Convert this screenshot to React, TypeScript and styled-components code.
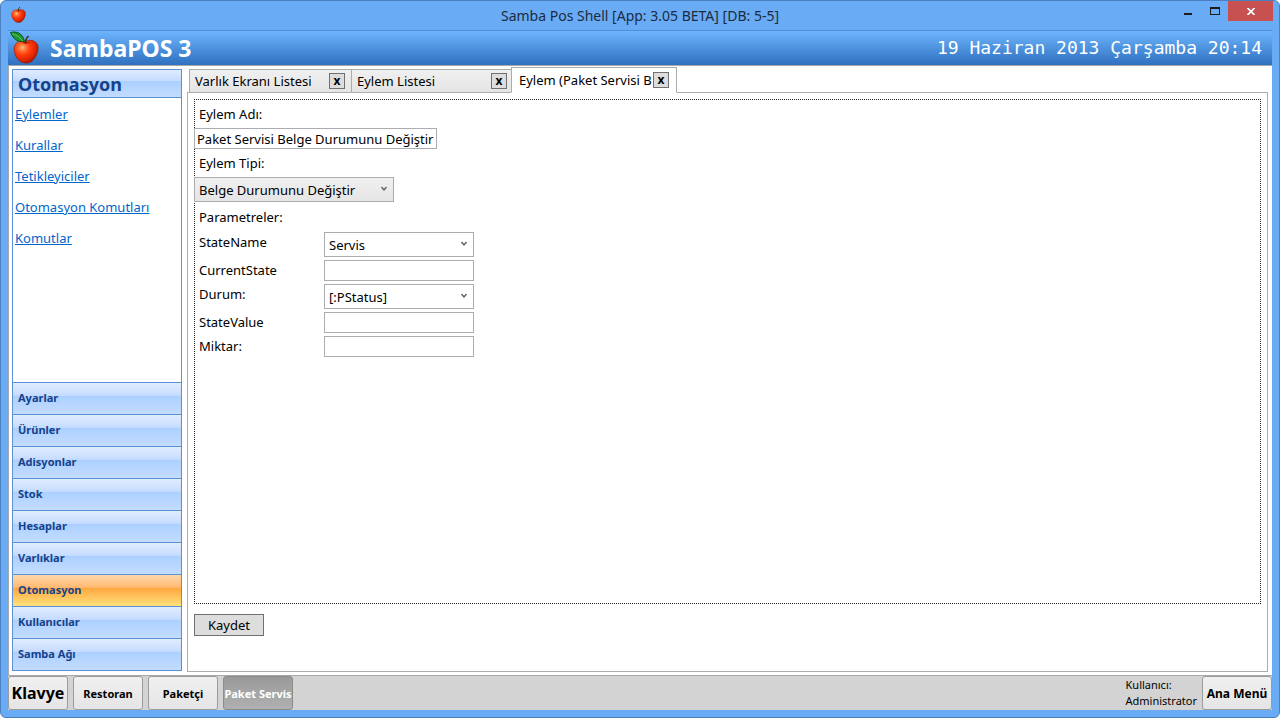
import React from "react";
import styled, { createGlobalStyle, css } from "styled-components";

const ui = '"Noto Sans", "Open Sans", sans-serif';

const GlobalStyle = createGlobalStyle`
  *, *::before, *::after { box-sizing: border-box; }
  body { margin: 0; background: #fff; font-family: ${ui}; font-size: 13px; color: #000; }
  button, input, select { font: inherit; color: inherit; margin: 0; border-radius: 0; }
  button { padding: 0; cursor: pointer; }
`;

const Window = styled.div`
  min-height: 100vh;
  display: flex;
  flex-direction: column;
  padding: 0 7px 7px;
  border: 1px solid #4a80bf;
  border-radius: 6px;
  background: #6aabf6;
`;

const TitleBar = styled.header`
  display: grid;
  grid-template-columns: 1fr auto 1fr;
  height: 29px;
  padding: 0 3px;
`;

const WindowTitle = styled.h1`
  margin: 0;
  font-size: 14px;
  font-weight: 400;
  line-height: 30px;
  color: #1b2b3d;
`;

const TitleIcon = styled.span`
  padding-top: 6px;
  line-height: 0;
`;

const Controls = styled.div`
  display: flex;
  justify-content: flex-end;
  align-items: flex-start;
  margin-right: -4px;
`;

const ControlButton = styled.button<{ $close?: boolean }>`
  display: grid;
  place-items: center;
  width: ${(p) => (p.$close ? 45 : 27)}px;
  height: 20px;
  border: 0;
  background: ${(p) => (p.$close ? "#c75050" : "transparent")};
`;

const Client = styled.div`
  flex: 1;
  display: flex;
  flex-direction: column;
  background: #fff;
`;

const Brand = styled.div`
  display: flex;
  align-items: flex-start;
  height: 36px;
  padding: 0 10px 0 2px;
  border-top: 1px solid #4f8fd6;
  border-bottom: 1px solid #a9a9a9;
  background: linear-gradient(#6db5fd, #2f70bf);
  color: #fff;
  line-height: 34px;
`;

const BrandName = styled.h2`
  flex: 1;
  margin: 0 0 0 11px;
  font-size: 23px;
  font-weight: 700;
`;

const Clock = styled.time`
  font-family: "DejaVu Sans Mono", "Liberation Mono", monospace;
  font-size: 18px;
  white-space: pre;
`;

const Body = styled.div`
  flex: 1;
  display: flex;
  gap: 5px;
  padding: 1px 4px 3px 3px;
  border-left: 1px solid #a9a9a9;
`;

const Sidebar = styled.aside`
  width: 170px;
  flex: none;
  display: flex;
  flex-direction: column;
  margin: 2px 0 1px;
  border: 1px solid #5b92d6;
`;

const blueGloss = "linear-gradient(#e0ecff 0%, #c6dcff 40%, #acd0ff 42%, #c3dcff 100%)";
const orangeGloss = "linear-gradient(#ffd9ab 0%, #ffb972 40%, #ffa73f 42%, #ffe17c 100%)";

const SideTitle = styled.h3`
  margin: 0;
  height: 28px;
  padding-left: 5px;
  border-bottom: 1px solid #5b92d6;
  background: ${blueGloss};
  color: #15428b;
  font-size: 18px;
  line-height: 28px;
`;

const Links = styled.nav`
  flex: 1;
  display: flex;
  flex-direction: column;
  align-items: flex-start;
  padding: 1px 2px;
`;

const SideLink = styled.a`
  color: #0066cc;
  line-height: 31px;
`;

const Group = styled.button<{ $active?: boolean }>`
  height: 32px;
  flex: none;
  padding: 0 5px 2px;
  border: 0;
  border-top: 1px solid #5b92d6;
  background: ${(p) => (p.$active ? orangeGloss : blueGloss)};
  color: #15428b;
  font-size: 11px;
  font-weight: 700;
  text-align: left;
`;

const Main = styled.main`
  flex: 1;
  min-width: 0;
  display: flex;
  flex-direction: column;
`;

const Tabs = styled.div`
  display: flex;
  align-items: flex-end;
  height: 26px;
  padding-left: 2px;
  margin-bottom: -1px;
  z-index: 1;
`;

const Tab = styled.div<{ $active?: boolean; $width: number }>`
  display: flex;
  align-items: center;
  width: ${(p) => p.$width}px;
  height: 24px;
  padding: 0 6px 0 5px;
  border: 1px solid #acacac;
  border-right-width: 0;
  background: linear-gradient(#f0f0f0, #e5e5e5);
  ${(p) =>
    p.$active &&
    css`
      height: 26px;
      padding: 0 7px;
      margin-left: -2px;
      border-right-width: 1px;
      border-bottom-color: #fff;
      background: #fff;
    `}
`;

const TabLabel = styled.button`
  flex: 1;
  min-width: 0;
  overflow: hidden;
  border: 0;
  background: none;
  text-align: left;
  white-space: nowrap;
`;

const TabClose = styled.button`
  flex: none;
  width: 16px;
  height: 16px;
  border: 1px solid #707070;
  background: #ddd;
  font-size: 12px;
  font-weight: 700;
  line-height: 12px;
`;

const Panel = styled.section`
  flex: 1;
  display: flex;
  flex-direction: column;
  padding: 6px 6px 35px;
  border: 1px solid #acacac;
`;

const Form = styled.form`
  flex: 1;
  display: flex;
  flex-direction: column;
  align-items: flex-start;
  border: 1px dotted #222;
`;

const Label = styled.label`
  padding-left: 4px;
  line-height: 28px;
`;

const Caption = styled.p`
  margin: 0;
  padding-left: 4px;
  line-height: 30px;
`;

const TextBox = styled.input`
  height: 21px;
  padding: 0 2px;
  border: 1px solid #abadb3;
  background: #fff;
`;

const NameBox = styled(TextBox)`
  width: 243px;
  margin-left: -1px;
`;

const SelectWrap = styled.div<{ $raised?: boolean }>`
  display: grid;
  align-items: center;
  width: ${(p) => (p.$raised ? 200 : 150)}px;
  height: 25px;
  border: 1px solid #acacac;
  background: ${(p) => (p.$raised ? "linear-gradient(#f0f0f0, #e5e5e5)" : "#fff")};
  margin-left: ${(p) => (p.$raised ? -1 : 0)}px;

  > * { grid-area: 1 / 1; }
  > svg { justify-self: end; margin-right: 5px; pointer-events: none; }
`;

const Select = styled.select`
  appearance: none;
  width: 100%;
  height: 23px;
  padding: 0 20px 0 4px;
  border: 0;
  background: transparent;
`;

const Params = styled.div`
  display: grid;
  grid-template-columns: 125px 150px;
  row-gap: 3px;
  padding-left: 4px;
`;

const ParamLabel = styled.label`
  line-height: 20px;
`;

const SaveButton = styled.button`
  align-self: flex-start;
  width: 70px;
  height: 22px;
  margin-top: 10px;
  border: 1px solid #707070;
  background: #ddd;
`;

const Footer = styled.footer`
  display: flex;
  align-items: center;
  gap: 5px;
  height: 35px;
  border-top: 1px solid #a9a9a9;
  background: #d3d3d3;
`;

const FooterButton = styled.button<{ $size?: number; $width?: number; $pressed?: boolean }>`
  flex: none;
  width: ${(p) => p.$width ?? 70}px;
  height: 34px;
  border: 1px solid ${(p) => (p.$pressed ? "#8c8c8c" : "#9c9c9c")};
  border-radius: 3px;
  background: ${(p) => (p.$pressed ? "linear-gradient(#9a9a9a, #b0b0b0)" : "linear-gradient(#f0f0f0, #e5e5e5)")};
  color: ${(p) => (p.$pressed ? "#fff" : "#000")};
  font-size: ${(p) => p.$size ?? 11}px;
  font-weight: 700;
  white-space: nowrap;
`;

const User = styled.p`
  margin: 0 0 0 auto;
  font-size: 11px;
  line-height: 16px;
`;

const Chevron = () => (
  <svg width="8" height="8" viewBox="0 0 8 8" aria-hidden="true">
    <path d="M1.500 1 4 4 6.500 1" fill="none" stroke="#606060" strokeWidth="1.400" />
  </svg>
);

const Apple = ({ width, height, id, leaf }: { width: number; height: number; id: string; leaf?: boolean }) => (
  <svg width={width} height={height} viewBox={leaf ? "0 0 29 33" : "3 5 26 28"} aria-hidden="true">
    <defs>
      <radialGradient id={id} cx="0.35" cy="0.32" r="0.75">
        <stop offset="0" stopColor="#ffc08c" />
        <stop offset="0.18" stopColor="#ff7a3a" />
        <stop offset="0.45" stopColor="#ff3a0c" />
        <stop offset="0.75" stopColor="#dc2400" />
        <stop offset="1" stopColor="#8e1000" />
      </radialGradient>
    </defs>
    <path d="M16 10.500C20 8 26.500 9.500 28 15C29 22 24 30 19.500 31.500C17 32.300 15 32.300 12.500 31.500C7 29.500 3 22 4.300 16C6 10 12 8.500 16 10.500Z" fill={`url(#${id})`} stroke="#8a1c00" strokeWidth="0.600" />
    <path d="M11.500 11.800Q16 14 21 11.200Q16 10 11.500 11.800Z" fill="#a01c00" opacity="0.700" />
    <path d="M15.500 12.500Q15.300 8 18.500 5" fill="none" stroke="#4a260c" strokeWidth="1.500" />
    {leaf && (
      <>
        <path d="M0.500 1.500C6 0 12.500 1.500 14.500 10.500C7 11.500 3 7.500 0.500 1.500Z" fill="#1c9630" stroke="#064d10" strokeWidth="0.900" />
        <path d="M2 2.500Q9 4.500 13 10" fill="none" stroke="#7bd67a" strokeWidth="0.700" />
      </>
    )}
  </svg>
);

const groups = ["Ayarlar", "Ürünler", "Adisyonlar", "Stok", "Hesaplar", "Varlıklar", "Otomasyon", "Kullanıcılar", "Samba Ağı"];
const links = ["Eylemler", "Kurallar", "Tetikleyiciler", "Otomasyon Komutları", "Komutlar"];
const tabs = [
  { label: "Varlık Ekranı Listesi", width: 162 },
  { label: "Eylem Listesi", width: 162 },
  { label: "Eylem (Paket Servisi B", width: 166, active: true },
];
const params: { id: string; label: string; value?: string }[] = [
  { id: "stateName", label: "StateName", value: "Servis" },
  { id: "currentState", label: "CurrentState" },
  { id: "durum", label: "Durum:", value: "[:PStatus]" },
  { id: "stateValue", label: "StateValue" },
  { id: "miktar", label: "Miktar:" },
];

export default function App() {
  return (
    <>
      <GlobalStyle />
      <Window>
        <TitleBar>
          <TitleIcon><Apple width={15} height={16} id="apple-small" /></TitleIcon>
          <WindowTitle>Samba Pos Shell [App: 3.05 BETA] [DB: 5-5]</WindowTitle>
          <Controls>
            <ControlButton aria-label="Simge durumuna küçült">
              <svg width="8" height="8"><path d="M0 6h8v2H0z" fill="#1c1c1c" /></svg>
            </ControlButton>
            <ControlButton aria-label="Ekranı kapla">
              <svg width="10" height="8"><path d="M0 0h10v8H0zM1 2v5h8V2z" fill="#1c1c1c" fillRule="evenodd" /></svg>
            </ControlButton>
            <ControlButton $close aria-label="Kapat">
              <svg width="8" height="7"><path d="M.5 0 7.500 7M7.500 0 .5 7" stroke="#fff" strokeWidth="1.700" /></svg>
            </ControlButton>
          </Controls>
        </TitleBar>
        <Client>
          <Brand>
            <Apple width={29} height={33} id="apple-large" leaf />
            <BrandName>SambaPOS 3</BrandName>
            <Clock dateTime="2013-06-19T20:14">19 Haziran 2013 Çarşamba 20:14</Clock>
          </Brand>
          <Body>
            <Sidebar>
              <SideTitle>Otomasyon</SideTitle>
              <Links>
                {links.map((l) => <SideLink key={l} href="#">{l}</SideLink>)}
              </Links>
              {groups.map((g) => <Group key={g} $active={g === "Otomasyon"}>{g}</Group>)}
            </Sidebar>
            <Main>
              <Tabs>
                {tabs.map((t) => (
                  <Tab key={t.label} $width={t.width} $active={t.active}>
                    <TabLabel>{t.label}</TabLabel>
                    <TabClose aria-label="Sekmeyi kapat">x</TabClose>
                  </Tab>
                ))}
              </Tabs>
              <Panel>
                <Form id="action" onSubmit={(e) => e.preventDefault()}>
                  <Label htmlFor="name">Eylem Adı:</Label>
                  <NameBox id="name" defaultValue="Paket Servisi Belge Durumunu Değiştir" />
                  <Label htmlFor="type">Eylem Tipi:</Label>
                  <SelectWrap $raised>
                    <Select id="type"><option>Belge Durumunu Değiştir</option></Select>
                    <Chevron />
                  </SelectWrap>
                  <Caption>Parametreler:</Caption>
                  <Params>
                    {params.map((p) => (
                      <React.Fragment key={p.id}>
                        <ParamLabel htmlFor={p.id}>{p.label}</ParamLabel>
                        {p.value ? (
                          <SelectWrap>
                            <Select id={p.id}><option>{p.value}</option></Select>
                            <Chevron />
                          </SelectWrap>
                        ) : (
                          <TextBox id={p.id} />
                        )}
                      </React.Fragment>
                    ))}
                  </Params>
                </Form>
                <SaveButton type="submit" form="action">Kaydet</SaveButton>
              </Panel>
            </Main>
          </Body>
          <Footer>
            <FooterButton $width={60} $size={16}>Klavye</FooterButton>
            <FooterButton>Restoran</FooterButton>
            <FooterButton>Paketçi</FooterButton>
            <FooterButton $pressed>Paket Servis</FooterButton>
            <User>Kullanıcı:<br />Administrator</User>
            <FooterButton $size={12}>Ana Menü</FooterButton>
          </Footer>
        </Client>
      </Window>
    </>
  );
}
